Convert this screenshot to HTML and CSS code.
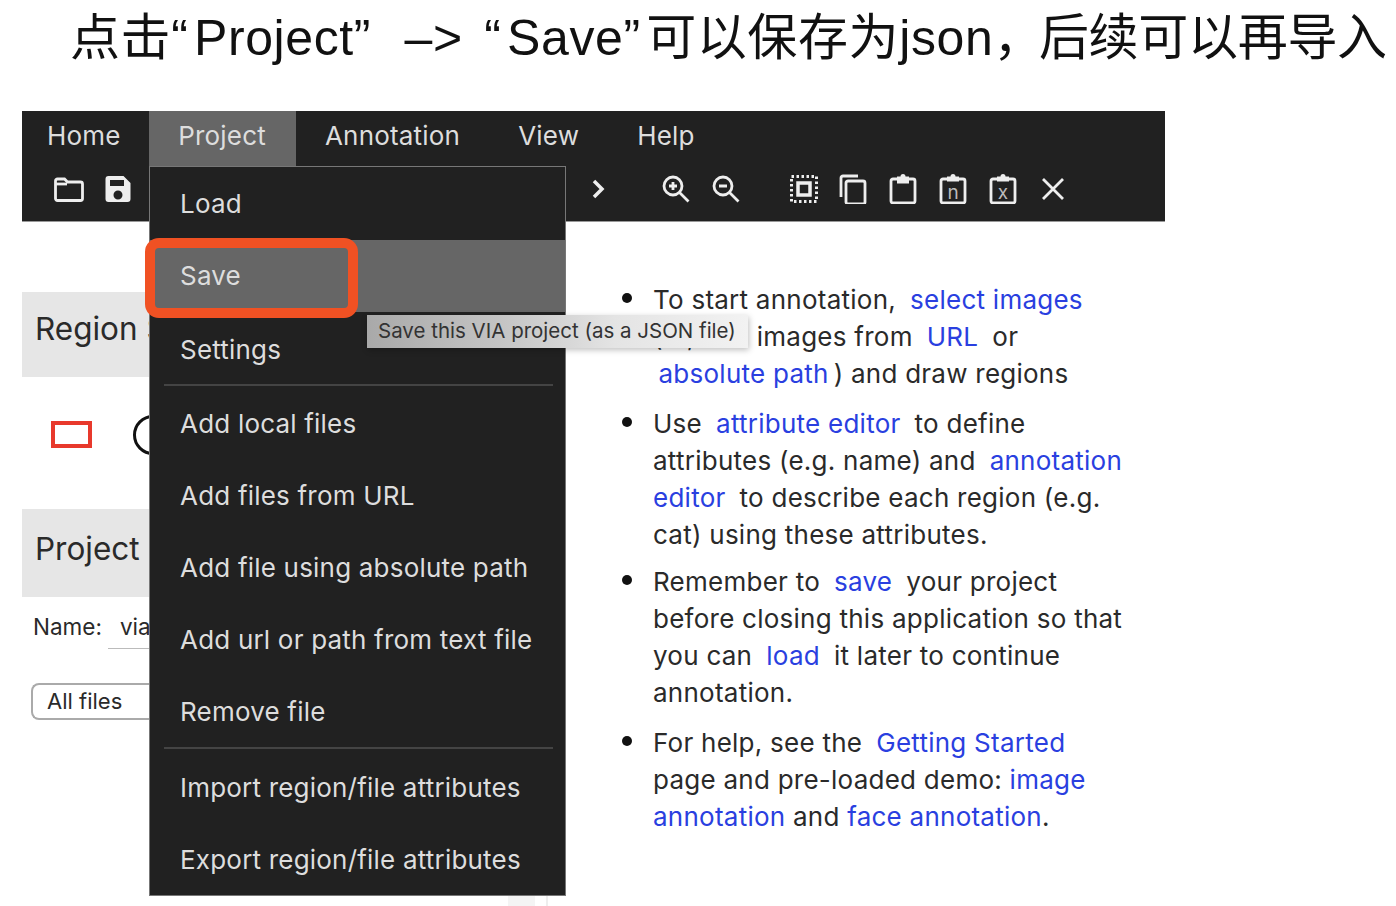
FILE: index.html
```html
<!DOCTYPE html>
<html lang="zh">
<head>
    <meta charset="UTF-8">
    <title>VIA project save</title>
    <link rel="stylesheet" href="styles.css">
</head>
<body>
    <h1 class="caption">点击<span class="quote">“</span>Project<span class="quote wide">”</span> –&gt; <span class="quote">“</span>Save<span class="quote">”</span>可以保存为json<span class="comma">，</span><span class="tail">后续可以再导入</span></h1>
    <div class="app">
        <div class="topbar">
            <nav class="menubar">
                <span class="menu-item">Home</span>
                <span class="menu-item active">Project</span>
                <span class="menu-item">Annotation</span>
                <span class="menu-item">View</span>
                <span class="menu-item">Help</span>
            </nav>
            <div class="toolbar">
                <div class="tools-left">
                    <svg class="icon" viewBox="0 0 30 30"><path d="M1.500 7a2 2 0 0 1 2-2h7l3 3h13a2 2 0 0 1 2 2v14.500a2 2 0 0 1-2 2h-23a2 2 0 0 1-2-2z"/><path d="M2 10h11"/></svg>
                    <svg class="icon" viewBox="0 0 30 30"><path class="solid" d="M5.500 2h15l7 7v16a3 3 0 0 1-3 3h-19a3 3 0 0 1-3-3v-20a3 3 0 0 1 3-3zM7 6v6h14v-6zM15 16.500a4.500 4.500 0 1 0 0 9a4.500 4.500 0 1 0 0-9z" fill-rule="evenodd"/></svg>
                </div>
                <div class="tools-right">
                    <svg class="icon chevron" viewBox="0 0 30 30"><path d="M11 7l8 8l-8 8"/></svg>
                    <div class="tool-group zoom-tools">
                        <svg class="icon" viewBox="0 0 30 30"><circle cx="12" cy="12" r="9"/><path d="M18.500 18.500l9 9M8 12h8M12 8v8"/></svg>
                        <svg class="icon" viewBox="0 0 30 30"><circle cx="12" cy="12" r="9"/><path d="M18.500 18.500l9 9M8 12h8"/></svg>
                    </div>
                    <div class="tool-group edit-tools">
                        <svg class="icon marquee" viewBox="0 0 30 30"><rect x="9" y="9" width="12" height="12"/><path class="dots" d="M2.500 2.500h25v25h-25z"/></svg>
                        <svg class="icon" viewBox="0 0 30 30"><path d="M3 23v-19a2 2 0 0 1 2-2h15"/><rect x="8" y="7" width="19" height="23" rx="2"/></svg>
                        <svg class="icon" viewBox="0 0 30 30"><rect x="3" y="5" width="24" height="24" rx="2"/><path class="solid" d="M9 2.500h3.500a2.500 2.500 0 0 1 5 0h3.500v7h-12z"/></svg>
                        <svg class="icon" viewBox="0 0 30 30"><rect x="3" y="5" width="24" height="24" rx="2"/><path class="solid" d="M9 2.500h3.500a2.500 2.500 0 0 1 5 0h3.500v5h-12z"/><text x="15" y="25" class="clip-letter">n</text></svg>
                        <svg class="icon" viewBox="0 0 30 30"><rect x="3" y="5" width="24" height="24" rx="2"/><path class="solid" d="M9 2.500h3.500a2.500 2.500 0 0 1 5 0h3.500v5h-12z"/><text x="15" y="25" class="clip-letter">x</text></svg>
                        <svg class="icon" viewBox="0 0 30 30"><path d="M5 5l20 20M25 5l-20 20"/></svg>
                    </div>
                </div>
            </div>
        </div>

        <div class="content">
            <aside class="sidebar">
                <div class="panel-title region-title">Region Shape</div>
                <div class="shapes">
                    <span class="shape-rect"></span>
                    <span class="shape-circle"></span>
                </div>
                <div class="panel-title project-title">Project</div>
                <div class="name-row">
                    <span>Name:</span>
                    <span class="name-input">via_project</span>
                </div>
                <div class="filter-box">All files</div>
            </aside>
            <main class="help">
                <ul>
                    <li>To start annotation, <a>select images</a><br>(or, add images from <a>URL</a> or<br><a class="first">absolute path</a>) and draw regions</li>
                    <li>Use <a>attribute editor</a> to define<br>attributes (e.g. name) and <a>annotation<br>editor</a> to describe each region (e.g.<br>cat) using these attributes.</li>
                    <li>Remember to <a>save</a> your project<br>before closing this application so that<br>you can <a>load</a> it later to continue<br>annotation.</li>
                    <li>For help, see the <a>Getting Started</a><br>page and pre-loaded demo: <a class="plain">image<br>annotation</a> and <a class="plain">face annotation</a>.</li>
                </ul>
            </main>
        </div>

        <div class="dropdown">
            <div class="drop-item load">Load</div>
            <div class="drop-item save">Save</div>
            <div class="drop-item settings">Settings</div>
            <hr>
            <div class="drop-item">Add local files</div>
            <div class="drop-item">Add files from URL</div>
            <div class="drop-item">Add file using absolute path</div>
            <div class="drop-item">Add url or path from text file</div>
            <div class="drop-item remove">Remove file</div>
            <hr>
            <div class="drop-item attrs">Import region/file attributes</div>
            <div class="drop-item attrs">Export region/file attributes</div>
        </div>
        <div class="highlight"></div>
        <div class="tooltip">Save this VIA project (as a JSON file)</div>
        <div class="page-sliver"></div>
    </div>
</body>
</html>
```

FILE: styles.css
```css
* {
    box-sizing: border-box;
}
html, body {
    height: 906px;
    overflow: hidden;
}
body {
    margin: 0;
    background-color: #fff;
    font-family: Inter, "Noto Sans CJK SC", sans-serif;
    color: #2a2a2a;
}
.caption {
    margin: 0;
    height: 111px;
    padding: 9px 0 0 70px;
    font-family: "Liberation Sans", "Noto Sans CJK SC", sans-serif;
    font-size: 50px;
    font-weight: 400;
    line-height: 58px;
    letter-spacing: 0.6px;
    word-spacing: 7px;
    color: #111;
    white-space: nowrap;
}
.quote {
    margin-right: 5.500px;
}
.quote.wide {
    margin-right: 12px;
}
.comma {
    margin-right: -5px;
}
.tail {
    letter-spacing: -0.3px;
}
.app {
    position: relative;
    margin-left: 22px;
    width: 1143px;
}
.topbar {
    height: 111px;
    background-color: #212121;
    color: #ddd;
    border-bottom: 1px solid #999;
}
.menubar {
    display: flex;
    height: 55px;
    font-size: 26px;
    letter-spacing: 0.2px;
}
.menu-item {
    padding: 8.500px 29px 0;
}
.menu-item:first-child {
    padding-left: 25px;
    padding-right: 28.500px;
}
.menu-item.active {
    padding-right: 30px;
    background-color: #666;
}
.toolbar {
    display: flex;
    justify-content: space-between;
    padding: 8px 0 0 32px;
}
.tools-left, .tools-right, .tool-group {
    display: flex;
    align-items: center;
}
.tools-left {
    gap: 19px;
}
.tools-right {
    padding-right: 97px;
}
.icon {
    width: 30px;
    height: 30px;
    fill: none;
    stroke: #eee;
    stroke-width: 2.800;
}
.icon .solid {
    fill: #eee;
    stroke: none;
}
.chevron {
    stroke-width: 3.500;
}
.marquee rect {
    stroke-width: 3.500;
}
.marquee .dots {
    stroke-width: 3;
    stroke-dasharray: 2.500 2.500;
}
.clip-letter {
    fill: #bbb;
    stroke: none;
    font-size: 19px;
    text-anchor: middle;
    font-family: Inter, sans-serif;
}
.zoom-tools {
    gap: 20px;
    margin: 0 48px 0 48px;
}
.edit-tools {
    gap: 20px;
}
.marquee {
    margin-right: -1px;
}
.content {
    display: flex;
}
.sidebar {
    width: 127px;
    padding-top: 70px;
}
.panel-title {
    background-color: #e6e6e6;
    font-size: 31.500px;
    padding-left: 13px;
    white-space: nowrap;
}
.region-title {
    height: 85px;
    line-height: 74px;
}
.project-title {
    height: 88px;
    line-height: 80px;
}
.shapes {
    display: flex;
    align-items: center;
    height: 132px;
    padding: 0 0 17px 29px;
}
.shape-rect {
    width: 41px;
    height: 27px;
    border: 4px solid #e8392c;
    flex: none;
}
.shape-circle {
    width: 40px;
    height: 40px;
    margin-left: 41px;
    border: 3px solid #111;
    border-radius: 50%;
    flex: none;
}
.name-row {
    display: flex;
    height: 51px;
    padding: 16px 0 0 11px;
    font-size: 22.500px;
    white-space: nowrap;
}
.name-input {
    margin-left: 6px;
    padding: 0 12px;
    height: 36px;
    border-bottom: 1px solid #bbb;
}
.filter-box {
    margin: 35px 0 0 9px;
    height: 37px;
    padding-left: 14px;
    font-size: 22px;
    line-height: 33px;
    border: 2px solid #aaa;
    border-right: none;
    border-radius: 8px 0 0 8px;
}
.help {
    padding-top: 59px;
    margin-left: 460px;
    font-size: 26px;
    line-height: 37px;
    letter-spacing: 0.25px;
}
.help ul {
    margin: 0;
    padding: 0 0 0 44px;
    list-style: none;
    white-space: nowrap;
}
.help li {
    position: relative;
    margin-bottom: 13px;
}
.help li:nth-child(2) {
    margin-bottom: 10px;
}
.help li::before {
    content: "";
    position: absolute;
    left: -31px;
    top: 12px;
    width: 10px;
    height: 10px;
    border-radius: 50%;
    background-color: #111;
}
.help a {
    color: #2a3fe0;
    margin: 0 6.500px;
}
.help a.first {
    margin: 0 5px 0 5.500px;
}
.help a.plain {
    margin: 0;
}
.dropdown {
    position: absolute;
    left: 127px;
    top: 55px;
    width: 417px;
    height: 730px;
    background-color: #212121;
    border: 1px solid #777;
    color: #ddd;
    font-size: 26px;
    letter-spacing: 0.2px;
}
.drop-item {
    height: 72px;
    padding: 22px 0 0 30px;
    white-space: nowrap;
}
.drop-item.load {
    height: 73px;
    padding-top: 21px;
}
.drop-item.save {
    padding-top: 20px;
    background-color: #666;
}
.drop-item.remove {
    height: 73px;
}
.drop-item.attrs {
    padding-top: 23px;
}
.dropdown hr {
    margin: 0 12px 0 14px;
    height: 2px;
    border: none;
    background-color: #444;
}
.highlight {
    position: absolute;
    left: 123px;
    top: 127px;
    width: 213px;
    height: 80px;
    border: 10px solid #f05123;
    border-radius: 14px;
}
.tooltip {
    position: absolute;
    left: 345px;
    top: 204px;
    width: 381px;
    height: 33px;
    background: linear-gradient(90deg, #a9a9a9 0%, #c4c4c4 35%, #e4e4e4 65%, #f2f2f2 100%);
    color: #333;
    font-size: 20.500px;
    line-height: 31px;
    padding-left: 11px;
    white-space: nowrap;
    box-shadow: 1px 2px 6px rgba(0, 0, 0, 0.25);
}
.page-sliver {
    position: absolute;
    left: 486px;
    top: 785px;
    width: 40px;
    height: 10px;
    background: linear-gradient(90deg, #f4f4f4 0, #f4f4f4 27px, #fff 27px, #fff 38px, #eee 38px);
}
```
